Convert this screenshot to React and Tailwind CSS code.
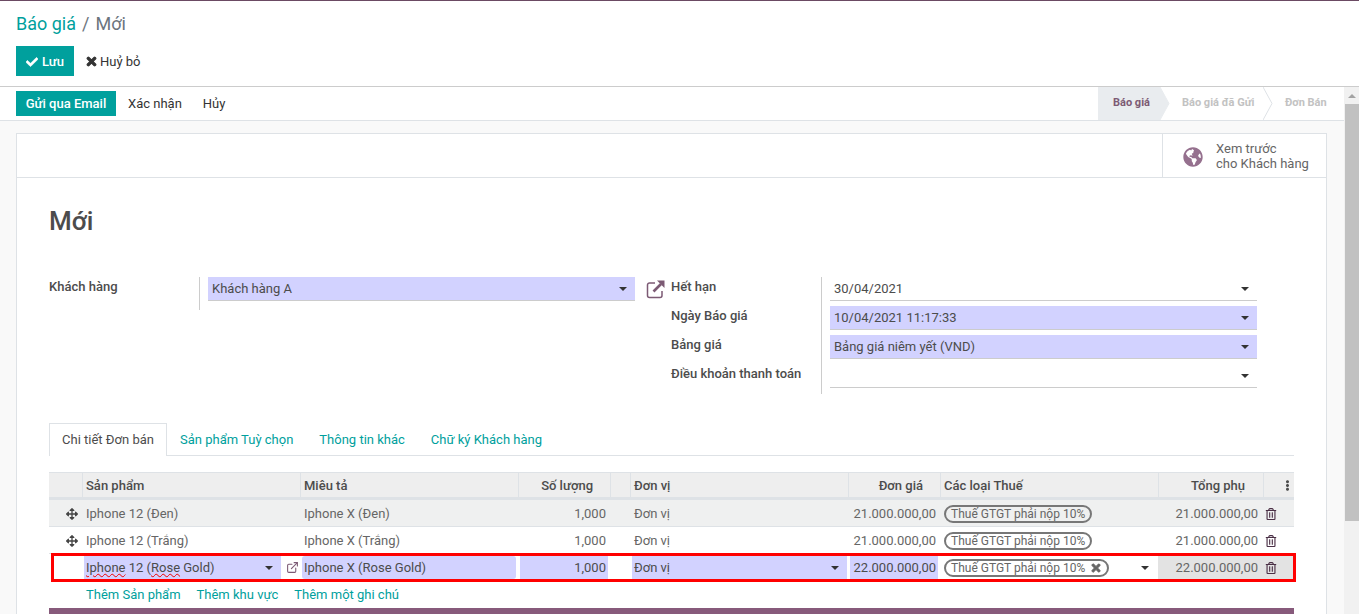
import React from 'react';
import { FaCheck, FaTimes, FaArrowsAlt, FaRegTrashAlt, FaGlobeAmericas, FaEllipsisV } from 'react-icons/fa';
import { ExternalLink } from 'lucide-react';

const Caret = ({ className = '' }) => (
  <span className={`w-0 h-0 border-x-[4px] border-x-transparent border-t-[4px] border-t-[#333] ${className}`} />
);

const Chevron = ({ fill, stroke }) => (
  <svg width="10" height="33" viewBox="0 0 10 33" className="shrink-0">
    <path d="M0 0 L9 16.5 L0 33" fill={fill} stroke={stroke} />
  </svg>
);

const BoldTimes = ({ className }) => (
  <FaTimes className={className} stroke="currentColor" strokeWidth={40} />
);

const OpenLink = () => (
  <svg width="20" height="20" viewBox="0 0 20 20" className="ml-[11px] mt-[2px] shrink-0 text-[#7c5a74]" fill="none" stroke="currentColor">
    <path d="M9 4H3.500A2 2 0 0 0 1.500 6v10.500a2 2 0 0 0 2 2H14a2 2 0 0 0 2-2V12" strokeWidth="1.500" />
    <path d="M7.500 12.500 15 5" strokeWidth="2.600" />
    <path d="M11 1.500h7.500V9z" fill="currentColor" stroke="none" />
  </svg>
);

const TaxTag = ({ remove }) => (
  <span className="h-[18px] px-[5px] flex items-center gap-[5px] rounded-full border-2 border-[#777] text-[#666] text-[12px] whitespace-nowrap">
    Thuế GTGT phải nộp 10%
    {remove && <BoldTimes className="text-[12px] text-[#666]" />}
  </span>
);

const Field = ({ value, filled }) => (
  <div className={`h-[24px] w-[427px] pl-1 pr-2 flex items-center justify-between border-b border-[#ccc] text-[#4c4c4c] ${filled ? 'bg-[#d2d2ff]' : ''}`}>
    <span>{value}</span>
    <Caret />
  </div>
);

const columns = 'grid grid-cols-[34px_218px_218px_92px_20px_218px_92px_218px_105px_30px]';

const Row = ({ name, desc, price, bg }) => (
  <div className={`${columns} h-[27px] pt-[1px] items-center border-b border-[#dee2e6] text-[#666] ${bg}`}>
    <div className="flex justify-end pr-[5px]"><FaArrowsAlt className="text-[12px] text-[#444]" /></div>
    <div className="pl-[3px]">{name}</div>
    <div className="pl-[3px]">{desc}</div>
    <div className="text-right pr-[5px]">1,000</div>
    <div />
    <div className="pl-[3px]">Đơn vị</div>
    <div className="text-right pr-[5px]">{price}</div>
    <div className="pl-[3px]"><span className="inline-flex"><TaxTag /></span></div>
    <div className="text-right pr-[6px]">{price}</div>
    <div className="pl-[1px]"><FaRegTrashAlt className="text-[12px] text-[#4a2f45]" /></div>
  </div>
);

const HeaderCell = ({ children, right, noBorder }) => (
  <div className={`h-full pt-[1px] flex items-center font-medium text-[#4c4c4c] ${noBorder ? '' : 'border-r border-[#dee2e6]'} ${right ? 'justify-end pr-[17px]' : 'pl-[3px]'}`}>
    {children}
  </div>
);

export default function App() {
  return (
    <div className="h-[614px] overflow-hidden flex flex-col bg-white border-t border-[#6b4a63] text-[13px] text-[#4c4c4c] font-['Roboto',sans-serif]">
      {/* Control panel */}
      <div className="h-[86px] shrink-0 px-4 border-b border-[#ccc]">
        <div className="h-[45px] pt-[10px] text-[18px] leading-[26px] text-[#6c757d]">
          <span className="text-[#00A09D]">Báo giá</span>
          <span className="mx-[6px]">/</span>
          Mới
        </div>
        <div className="flex items-center">
          <button className="h-[30px] w-[58px] pt-[1px] flex items-center justify-center gap-1 bg-[#00A09D] text-white font-medium">
            <FaCheck className="text-[12px]" stroke="currentColor" strokeWidth={20} /> Lưu
          </button>
          <button className="ml-[11px] pt-[1px] flex items-center gap-[2px] text-[#333]">
            <BoldTimes className="text-[13px]" /> Huỷ bỏ
          </button>
        </div>
      </div>

      <div className="flex-1 min-h-0 flex">
        <div className="flex-1 min-w-0 flex flex-col">
          {/* Status bar */}
          <div className="h-[34px] shrink-0 pl-4 flex items-center justify-between border-b border-[#dee2e6]">
            <div className="flex items-center">
              <button className="h-[25px] w-[100px] bg-[#00A09D] text-white font-medium">Gửi qua Email</button>
              <button className="ml-[12px] text-[#333]">Xác nhận</button>
              <button className="ml-[21px] text-[#333]">Hủy</button>
            </div>
            <div className="flex items-stretch h-[33px] text-[11px] font-bold">
              <div className="w-[62px] flex items-center pl-[15px] bg-[#e9ecef] text-[#7c5a74]">Báo giá</div>
              <Chevron fill="#e9ecef" stroke="#e9ecef" />
              <div className="w-[93px] flex items-center pl-[12px] text-[#c2c2c2]">Báo giá đã Gửi</div>
              <Chevron fill="white" stroke="#dee2e6" />
              <div className="w-[71px] flex items-center pl-[12px] text-[#c2c2c2]">Đơn Bán</div>
            </div>
          </div>

          {/* Content */}
          <div className="flex-1 min-h-0 pt-3 pl-4 pr-[17px] overflow-hidden bg-[#f9f9f9]">
            <div className="h-[600px] bg-white border border-[#dee2e6]">
              <div className="h-[44px] flex justify-end border-b border-[#dee2e6]">
                <div className="w-[164px] pt-[1px] flex items-center pl-[20px] gap-[13px] border-l border-[#dee2e6] text-[#666] leading-[15px]">
                  <FaGlobeAmericas className="mt-[2px] text-[20px] text-[#95708e]" />
                  <div>Xem trước<br />cho Khách hàng</div>
                </div>
              </div>

              <div className="pl-[32px]">
                <h1 className="h-[99px] pt-[26px] text-[26px] leading-[35px] font-medium text-[#4c4c4c]">Mới</h1>

                <div className="flex h-[117px]">
                  <div className="w-[150px] font-medium">Khách hàng</div>
                  <div className="h-[33px] border-l border-[#ccc] pl-2 flex items-start">
                    <Field value="Khách hàng A" filled />
                  </div>
                  <OpenLink />
                  <div className="ml-[5px] w-[150px] flex flex-col font-medium">
                    <div className="h-[29px]">Hết hạn</div>
                    <div className="h-[29px]">Ngày Báo giá</div>
                    <div className="h-[29px]">Bảng giá</div>
                    <div className="h-[29px]">Điều khoản thanh toán</div>
                  </div>
                  <div className="border-l border-[#ccc] pl-2 flex flex-col gap-[5px]">
                    <Field value="30/04/2021" />
                    <Field value="10/04/2021 11:17:33" filled />
                    <Field value="Bảng giá niêm yết (VND)" filled />
                    <Field value="" />
                  </div>
                </div>

                {/* Tabs */}
                <div className="mt-[29px] w-[1245px] h-[33px] flex border-b border-[#dee2e6] text-[#00A09D]">
                  <div className="h-[33px] w-[118px] flex items-center justify-center bg-white border border-b-0 border-[#dee2e6] text-[#4c4c4c]">Chi tiết Đơn bán</div>
                  <div className="ml-[13px] pt-[1px] flex items-center">Sản phẩm Tuỳ chọn</div>
                  <div className="ml-[26px] pt-[1px] flex items-center">Thông tin khác</div>
                  <div className="ml-[26px] pt-[1px] flex items-center">Chữ ký Khách hàng</div>
                </div>

                {/* Order lines */}
                <div className="mt-[16px] w-[1245px]">
                  <div className={`${columns} h-[28px] bg-[#eeeeee] border-t border-[#dee2e6] border-b-[3px] border-b-[#dee2e6]`}>
                    <HeaderCell />
                    <HeaderCell>Sản phẩm</HeaderCell>
                    <HeaderCell>Miêu tả</HeaderCell>
                    <HeaderCell right>Số lượng</HeaderCell>
                    <HeaderCell />
                    <HeaderCell>Đơn vị</HeaderCell>
                    <HeaderCell right>Đơn giá</HeaderCell>
                    <HeaderCell>Các loại Thuế</HeaderCell>
                    <HeaderCell right><span className="mr-px">Tổng phụ</span></HeaderCell>
                    <HeaderCell noBorder><FaEllipsisV className="ml-[15px] text-[11px]" /></HeaderCell>
                  </div>
                  <Row name="Iphone 12 (Đen)" desc="Iphone X (Đen)" price="21.000.000,00" bg="bg-[#eff0f0]" />
                  <Row name="Iphone 12 (Trắng)" desc="Iphone X (Trắng)" price="21.000.000,00" bg="bg-white" />

                  {/* Row being edited */}
                  <div className={`${columns} relative h-[27px] items-center text-[#4c4c4c]`}>
                    <div />
                    <div className="ml-[1px] flex items-center gap-[5px]">
                      <div className="h-[23px] w-[197px] pl-[2px] pr-2 flex items-center justify-between bg-[#d2d2ff]">
                        <span><span className="underline decoration-wavy decoration-1 decoration-[#e00]">Iphone</span> 12 (<span className="underline decoration-wavy decoration-1 decoration-[#e00]">Rose</span> Gold)</span>
                        <Caret />
                      </div>
                      <ExternalLink className="w-[13px] h-[13px] text-[#7c5a74]" />
                    </div>
                    <div className="h-[23px] ml-[1px] mr-[3px] pl-[2px] flex items-center rounded-[3px] bg-[#d2d2ff]">Iphone X (Rose Gold)</div>
                    <div className="h-[23px] ml-[1px] mr-[3px] pr-[2px] flex items-center justify-end bg-[#d2d2ff]">1,000</div>
                    <div />
                    <div className="h-[23px] ml-[1px] mr-[2px] pl-[2px] pr-2 flex items-center justify-between bg-[#d2d2ff]">Đơn vị <Caret /></div>
                    <div className="h-[23px] ml-[1px] mr-[3px] pr-[2px] flex items-center justify-end bg-[#d2d2ff]">22.000.000,00</div>
                    <div className="pl-[3px] pr-[10px] flex items-center justify-between">
                      <TaxTag remove />
                      <Caret />
                    </div>
                    <div className="h-full -ml-px flex items-center justify-end pr-[6px] bg-[#e3e3e3] text-[#666]">22.000.000,00</div>
                    <div className="h-full pl-[1px] flex items-center bg-[#e3e3e3]"><FaRegTrashAlt className="text-[12px] text-[#4a2f45]" /></div>
                    <div className="absolute left-[2px] -right-[2px] -top-[1px] -bottom-[1px] border-[3px] border-[#f00] pointer-events-none" />
                  </div>

                  <div className="h-[27px] pl-[37px] flex items-center gap-[16px] text-[#00A09D]">
                    <span>Thêm Sản phẩm</span>
                    <span>Thêm khu vực</span>
                    <span>Thêm một ghi chú</span>
                  </div>
                  <div className="h-[30px] bg-[#875A7B]" />
                </div>
              </div>
            </div>
          </div>
        </div>

        {/* Scrollbar */}
        <div className="w-[15px] shrink-0 flex flex-col bg-[#f1f1f1]">
          <div className="h-[17px] flex items-center justify-center">
            <span className="w-0 h-0 border-x-[4px] border-x-transparent border-b-[4px] border-b-[#a3a3a3]" />
          </div>
          <div className="h-[417px] ml-px bg-[#c1c1c1]" />
        </div>
      </div>
    </div>
  );
}
